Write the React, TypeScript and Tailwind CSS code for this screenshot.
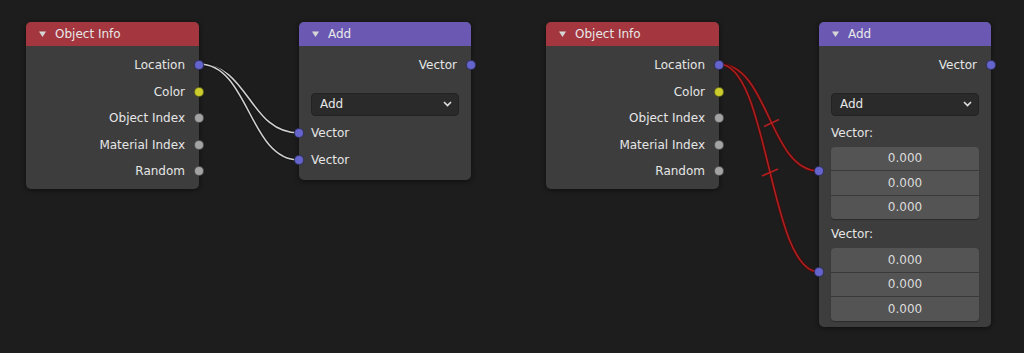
import type { ReactNode } from "react";

const socketColors = {
  vector: "bg-[#6464cc]",
  color: "bg-[#cccc2e]",
  float: "bg-[#a3a3a3]",
};

type SocketKind = keyof typeof socketColors;

function Socket({ kind, side }: { kind: SocketKind; side: "left" | "right" }) {
  return (
    <span
      className={`absolute top-1/2 h-[10px] w-[10px] -translate-y-1/2 rounded-full border border-black/50 ${socketColors[kind]} ${side === "right" ? "right-[-5px]" : "left-[-5px]"}`}
    />
  );
}

function OutputRow({ label, kind }: { label: string; kind: SocketKind }) {
  return (
    <div className="relative flex h-[26.5px] items-center justify-end pr-[14px]">
      {label}
      <Socket kind={kind} side="right" />
    </div>
  );
}

function InputRow({ label }: { label: string }) {
  return (
    <div className="relative flex h-[27px] items-center pl-3">
      {label}
      <Socket kind="vector" side="left" />
    </div>
  );
}

function Node({ title, header, className, children }: { title: string; header: string; className: string; children: ReactNode }) {
  return (
    <div className={`absolute rounded-[5px] bg-[#3d3d3d] shadow-[0_1px_5px_rgba(0,0,0,0.55)] ${className}`}>
      <div className={`flex h-6 items-center gap-[9px] rounded-t-[5px] pl-[13px] ${header}`}>
        <svg width="7" height="6" viewBox="0 0 7 6">
          <path d="M0 0.5 L7 0.5 L3.5 6 Z" fill="#d6d6d6" />
        </svg>
        <span className="text-[12px] text-[#e8e8e8]">{title}</span>
      </div>
      {children}
    </div>
  );
}

function ObjectInfo({ className }: { className: string }) {
  return (
    <Node title="Object Info" header="bg-[#a3363f]" className={`h-[167px] w-[173px] ${className}`}>
      <div className="pt-[6px]">
        <OutputRow label="Location" kind="vector" />
        <OutputRow label="Color" kind="color" />
        <OutputRow label="Object Index" kind="float" />
        <OutputRow label="Material Index" kind="float" />
        <OutputRow label="Random" kind="float" />
      </div>
    </Node>
  );
}

function Dropdown() {
  return (
    <div className="mx-3 mt-[14px] flex h-[23px] items-center justify-between rounded-[4px] border border-[#222] bg-[#2a2a2a] pl-2 pr-[6px]">
      <span>Add</span>
      <svg width="9" height="6" viewBox="0 0 9 6">
        <path d="M1 1 L4.5 4.5 L8 1" fill="none" stroke="#e0e0e0" strokeWidth="1.6" />
      </svg>
    </div>
  );
}

function VectorField() {
  return (
    <div className="relative mt-[2px]">
      <span className="absolute left-[-5px] top-[24px] h-[10px] w-[10px] -translate-y-1/2 rounded-full border border-black/50 bg-[#6464cc]" />
      <div className="mx-3 flex flex-col gap-px overflow-hidden rounded-[4px] bg-[#3a3a3a] shadow-[0_1px_1px_rgba(0,0,0,0.3)]">
        {[0, 1, 2].map((i) => (
          <div key={i} className="flex h-[23.5px] items-center justify-center bg-[#545454] text-[#dcdcdc]">
            0.000
          </div>
        ))}
      </div>
    </div>
  );
}

function Wire({ d, color, edge }: { d: string; color: string; edge: string }) {
  return (
    <>
      <path d={d} fill="none" stroke={edge} strokeWidth="3.6" />
      <path d={d} fill="none" stroke={color} strokeWidth="1.6" />
    </>
  );
}

export default function App() {
  return (
    <div className="relative h-[353px] w-[1024px] overflow-hidden bg-[#1d1d1d] font-['DejaVu_Sans',sans-serif] text-[12px] text-[#e6e6e6]">
      <svg className="absolute inset-0" width="1024" height="353">
        <Wire d="M199 64 C249 64 249 133 299 133" color="#cfcfcf" edge="#151515" />
        <Wire d="M199 64 C249 64 249 160 299 160" color="#cfcfcf" edge="#151515" />
        <Wire d="M719 64 C769 64 769 171 819 171" color="#b01f1f" edge="#3a1010" />
        <Wire d="M719 64 C769 64 769 272 819 272" color="#b01f1f" edge="#3a1010" />
        <g stroke="#b01f1f" strokeWidth="1.8">
          <line x1="764" y1="126.5" x2="779" y2="119.5" />
          <line x1="762" y1="176" x2="778" y2="169" />
        </g>
      </svg>

      <ObjectInfo className="left-[26px] top-[22px]" />

      <Node title="Add" header="bg-[#6a58b3]" className="left-[299px] top-[22px] h-[158px] w-[172px]">
        <div className="pt-[6px]">
          <OutputRow label="Vector" kind="vector" />
          <Dropdown />
          <div className="mt-[4px]">
            <InputRow label="Vector" />
            <InputRow label="Vector" />
          </div>
        </div>
      </Node>

      <ObjectInfo className="left-[546px] top-[22px]" />

      <Node title="Add" header="bg-[#6a58b3]" className="left-[819px] top-[22px] h-[305px] w-[172px]">
        <div className="pt-[6px]">
          <OutputRow label="Vector" kind="vector" />
          <Dropdown />
          <div className="mt-[6px] flex h-[23px] items-center pl-3">Vector:</div>
          <VectorField />
          <div className="mt-[3px] flex h-6 items-center pl-3">Vector:</div>
          <VectorField />
        </div>
      </Node>
    </div>
  );
}
